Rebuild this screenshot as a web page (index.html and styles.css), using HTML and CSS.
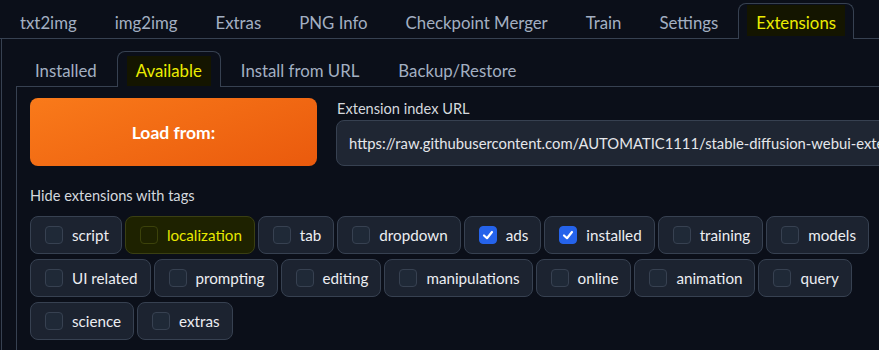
FILE: index.html
```html
<!DOCTYPE html>
<html>
<head>
<meta charset="utf-8">
<link rel="stylesheet" href="styles.css">
</head>
<body>
<div class="app">
  <div class="nav top-nav">
    <div class="tab"><span class="tl">txt2img</span></div>
    <div class="tab"><span class="tl">img2img</span></div>
    <div class="tab"><span class="tl">Extras</span></div>
    <div class="tab"><span class="tl">PNG Info</span></div>
    <div class="tab"><span class="tl">Checkpoint Merger</span></div>
    <div class="tab"><span class="tl">Train</span></div>
    <div class="tab"><span class="tl">Settings</span></div>
    <div class="tab selected"><span class="tl">Extensions</span></div>
  </div>
  <div class="panel outer">
    <div class="nav inner-nav">
      <div class="tab itab"><span class="tl">Installed</span></div>
      <div class="tab itab selected"><span class="tl">Available</span></div>
      <div class="tab itab"><span class="tl">Install from URL</span></div>
      <div class="tab itab"><span class="tl">Backup/Restore</span></div>
    </div>
    <div class="panel inner">
      <div class="load-row">
        <button class="load-btn">Load from:</button>
        <div class="url-col">
          <div class="field-label">Extension index URL</div>
          <div class="url-input">https://raw.githubusercontent.com/AUTOMATIC1111/stable-diffusion-webui-extensions/master/index.json</div>
        </div>
      </div>
      <div class="field-label hide-label">Hide extensions with tags</div>
      <div class="chips">
        <label class="chip"><span class="box"></span><span>script</span></label>
        <label class="chip hl"><span class="box"></span><span>localization</span></label>
        <label class="chip"><span class="box"></span><span>tab</span></label>
        <label class="chip"><span class="box"></span><span>dropdown</span></label>
        <label class="chip"><span class="box checked"><svg viewBox="0 0 18 18" width="18" height="18"><polyline points="5,9.5 8,12.2 13,6" fill="none" stroke="#fff" stroke-width="2.2" stroke-linecap="round" stroke-linejoin="round"/></svg></span><span>ads</span></label>
        <label class="chip"><span class="box checked"><svg viewBox="0 0 18 18" width="18" height="18"><polyline points="5,9.5 8,12.2 13,6" fill="none" stroke="#fff" stroke-width="2.2" stroke-linecap="round" stroke-linejoin="round"/></svg></span><span>installed</span></label>
        <label class="chip"><span class="box"></span><span>training</span></label>
        <label class="chip"><span class="box"></span><span>models</span></label>
        <label class="chip"><span class="box"></span><span>UI related</span></label>
        <label class="chip"><span class="box"></span><span>prompting</span></label>
        <label class="chip"><span class="box"></span><span>editing</span></label>
        <label class="chip"><span class="box"></span><span>manipulations</span></label>
        <label class="chip"><span class="box"></span><span>online</span></label>
        <label class="chip"><span class="box"></span><span>animation</span></label>
        <label class="chip"><span class="box"></span><span>query</span></label>
        <label class="chip"><span class="box"></span><span>science</span></label>
        <label class="chip"><span class="box"></span><span>extras</span></label>
      </div>
    </div>
  </div>
</div>
</body>
</html>
```

FILE: styles.css
```css
html, body {
  margin: 0;
  padding: 0;
  background: #0b0f19;
  overflow: hidden;
}
body {
  font-family: Lato, "Liberation Sans", sans-serif;
  font-size: 16px;
  color: #e5e7eb;
  width: 879px;
  height: 350px;
}
.app {
  width: 980px;
  height: 350px;
  overflow: hidden;
  padding-top: 3px;
}
.nav {
  display: flex;
  border-bottom: 1px solid #374151;
}
.top-nav {
  padding-left: 2px;
  gap: 2px;
}
.tab {
  height: 36px;
  margin-bottom: -1px;
  box-sizing: border-box;
  border: 1px solid transparent;
  border-bottom: none;
  border-radius: 8px 8px 0 0;
  padding: 0 8px;
  display: flex;
  align-items: stretch;
  color: #a3afc2;
  font-size: 16.8px;
  white-space: nowrap;
}
.tab .tl {
  display: flex;
  align-items: center;
  padding: 4px 9px 0;
  margin: 1px 0 3px;
}
.tab.selected {
  border-color: #374151;
  background: #0b0f19;
  color: #ecec00;
}
.tab.selected .tl {
  background: #141500;
}
.panel.outer {
  margin-left: 1px;
  border-left: 1px solid #374151;
  padding: 12px 0 0 14px;
}
.inner-nav {
  gap: 1px;
}
.itab {
  padding: 0 9px;
}
.itab .tl {
  margin: 4px 0 1px;
  padding: 0 9px 1px;
}
.panel.inner {
  border-left: 1px solid #374151;
  padding: 11px 0 40px 13px;
}
.load-row {
  display: flex;
  gap: 19px;
}
.load-btn {
  width: 287px;
  height: 68px;
  flex: none;
  border: none;
  border-radius: 8px;
  background: linear-gradient(160deg, #f97a1a, #ea5a0d);
  color: #ffffff;
  font-family: Lato, "Liberation Sans", sans-serif;
  font-size: 17.5px;
  font-weight: 700;
}
.url-col {
  flex: 1;
  display: flex;
  flex-direction: column;
}
.field-label {
  color: #d4d8de;
  font-size: 14.6px;
  height: 22px;
  line-height: 22px;
  padding-left: 1px;
}
.url-input {
  height: 46px;
  box-sizing: border-box;
  border: 1px solid #374151;
  border-radius: 8px;
  background: #1f2633;
  padding: 0 12px;
  display: flex;
  align-items: center;
  white-space: nowrap;
  overflow: hidden;
  font-size: 14.8px;
  color: #e5e7eb;
}
.hide-label {
  margin-top: 19px;
  padding-left: 0;
}
.chips {
  margin-top: 9px;
  width: 900px;
  display: flex;
  flex-wrap: wrap;
  gap: 5px 3px;
}
.chip {
  height: 38px;
  box-sizing: border-box;
  display: flex;
  align-items: center;
  gap: 9px;
  padding: 0 12px 0 14px;
  border: 1px solid #374151;
  border-radius: 8px;
  background: #1c2330;
  color: #eceef2;
  font-size: 15.2px;
  white-space: nowrap;
}
.chip.hl {
  background: #1e2200;
  border-color: #3a3f12;
  color: #e8e800;
}
.box {
  width: 18px;
  height: 18px;
  flex: none;
  box-sizing: border-box;
  border: 1px solid #374151;
  border-radius: 4px;
  background: #1f2937;
  display: flex;
}
.chip.hl .box {
  background: #1e2200;
  border-color: #3c420a;
}
.box.checked {
  background: #2563eb;
  border-color: #2563eb;
}
.box svg {
  margin: -1px;
}
```
